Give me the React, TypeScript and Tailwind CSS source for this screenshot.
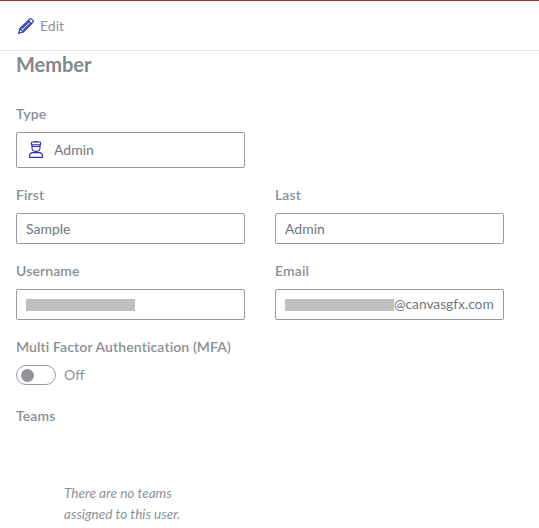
const labelClass = "block leading-[18px] font-semibold text-[14px] tracking-[0.12px] text-[#8a8e96]";
const boxClass = "mt-[9px] h-[31px] border border-[#979ba3] rounded-[2px] flex items-center pl-[9px] text-[#6f7680]";

export default function App() {
  return (
    <div className="w-[539px] h-[528px] overflow-hidden bg-white font-['Lato','Liberation_Sans',sans-serif] text-[14px] text-[#6b7280]">
      <div className="h-px bg-[#b22a2e]" />
      <div className="h-[50px] flex items-center pl-[18px] border-b border-[#e8e8e8]">
        <svg width="16" height="16" viewBox="0 0 16 16" fill="none" stroke="#2a2fb8" strokeWidth="1.2" className="mr-[6px]">
          <path d="M.7 15.3 L2 10.6 L11.6 1.1 Q12.6 .3 13.6 1.1 L14.9 2.4 Q15.7 3.4 14.8 4.4 L5.4 14 Z" />
          <path d="M2 10.6 L5.4 14 M10.4 2.4 L13.6 5.6 M3.6 10.8 L11.8 2.8 M5.2 12.4 L13 4.4" />
        </svg>
        <span className="text-[#8c9299]">Edit</span>
      </div>
      <div className="px-4">
        <h1 className="text-[20px] leading-[26px] font-bold text-[#82878e]">Member</h1>
        <label className={"mt-[28px] " + labelClass}>Type</label>
        <div className="mt-[9px] w-[229px] h-[36px] border border-[#979ba3] rounded-[2px] flex items-center pl-[12px] text-[#6f7680] pb-[1px]">
          <svg width="14" height="17" viewBox="0 0 14 17" fill="none" stroke="#2a2fb8" strokeWidth="1.1" className="mr-[11px]">
            <path d="M2.5 1.2 L7 .6 L11.5 1.2 V3.8 H2.5 Z" />
            <path d="M3 3.8 V7 Q3 10.4 7 10.4 Q11 10.4 11 7 V3.8" />
            <path d="M3 5.4 H11" />
            <path d="M.5 16.4 V14.6 Q.5 12 3.6 11.6 H10.4 Q13.5 12 13.5 14.6 V16.4 Z" />
          </svg>
          Admin
        </div>
        <div className="grid grid-cols-[229px_229px] gap-x-[30px] mt-[18px]">
          <div>
            <label className={labelClass}>First</label>
            <div className={boxClass}>Sample</div>
          </div>
          <div>
            <label className={labelClass}>Last</label>
            <div className={boxClass}>Admin</div>
          </div>
          <div className="mt-[18px]">
            <label className={labelClass}>Username</label>
            <div className={boxClass}>
              <div className="w-[109px] h-[12px] bg-[#c0c0c0]" />
            </div>
          </div>
          <div className="mt-[18px]">
            <label className={labelClass}>Email</label>
            <div className={boxClass + " pb-[1px]"}>
              <div className="w-[109px] h-[12px] bg-[#c0c0c0] mt-[1px]" />
              <span className="text-[13.75px]">@canvasgfx.com</span>
            </div>
          </div>
        </div>
        <label className={"mt-[18px] " + labelClass}>Multi Factor Authentication (MFA)</label>
        <div className="mt-[9px] flex items-center">
          <div className="w-[40px] h-[20px] border border-[#979ba3] rounded-full flex items-center pl-[4px]">
            <div className="w-[13px] h-[13px] rounded-full bg-[#91949c]" />
          </div>
          <span className="ml-[8px] text-[#8c9299] -mt-[1px]">Off</span>
        </div>
        <label className={"mt-[22px] " + labelClass}>Teams</label>
        <div className="mt-[58px] ml-[48px] italic text-[13.6px] leading-[21px] text-[#8c9299]">
          <div>There are no teams</div>
          <div>assigned to this user.</div>
        </div>
      </div>
    </div>
  );
}
